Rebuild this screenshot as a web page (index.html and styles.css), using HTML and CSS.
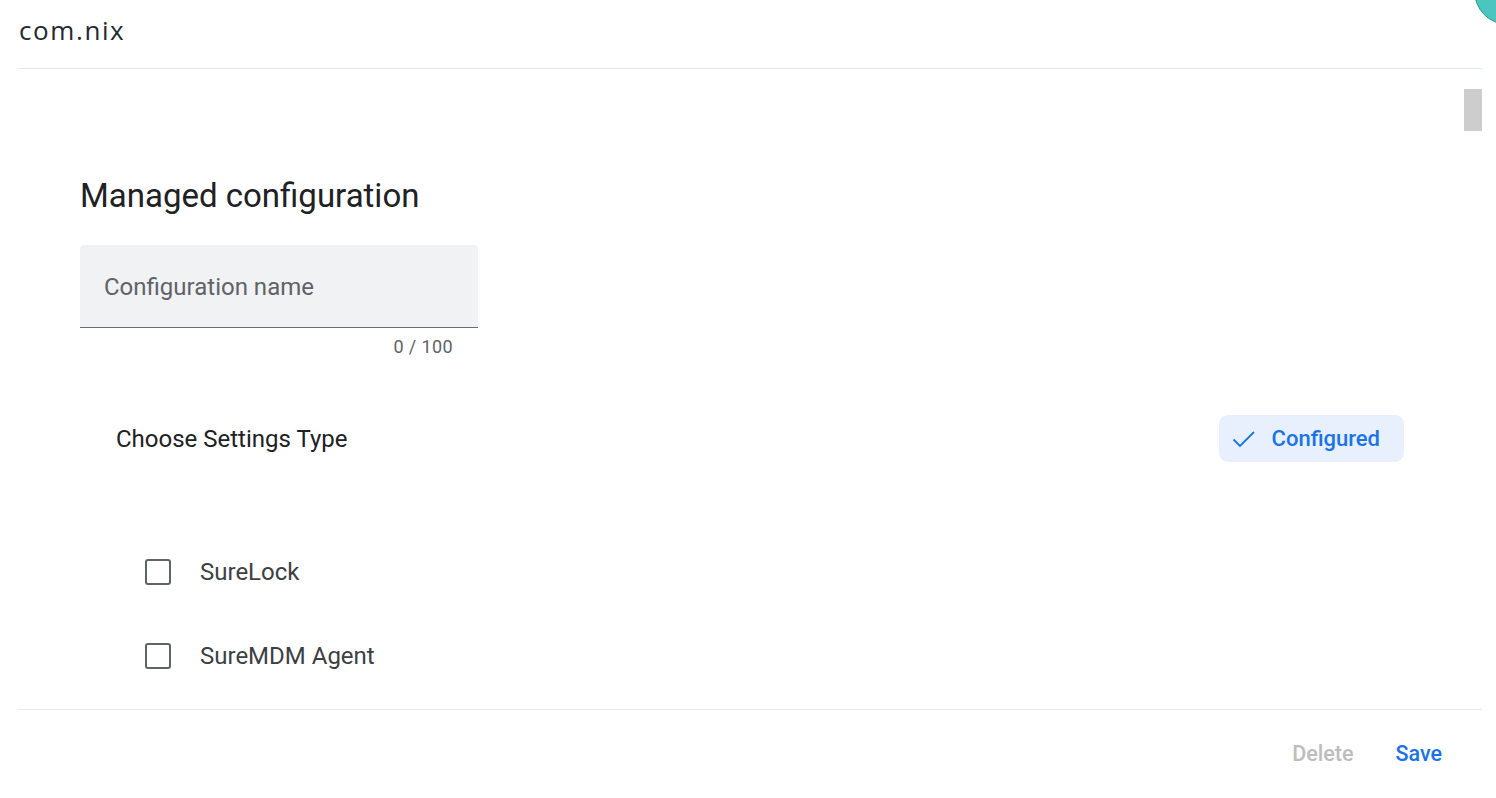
FILE: index.html
```html
<!DOCTYPE html>
<html lang="en">
<head>
  <meta charset="UTF-8">
  <title>com.nix - Managed configuration</title>
  <link rel="stylesheet" href="styles.css">
</head>
<body>

  <div class="avatar"></div>

  <div class="dialog">
    <div class="dialog-header">
      <span class="app-name">com.nix</span>
    </div>

    <div class="dialog-body">
      <div class="content">
        <h2 class="title">Managed configuration</h2>

        <div class="field">
          <input type="text" class="field-input" placeholder="Configuration name" maxlength="100">
        </div>
        <div class="counter">0 / 100</div>

        <div class="settings-row">
          <span class="settings-label">Choose Settings Type</span>
          <button class="chip">
            <svg width="24" height="24" viewBox="0 0 24 24">
              <polyline points="1.5,12.5 8,19 22,5" fill="none" stroke="#1a73e8" stroke-width="1.8"/>
            </svg>
            <span>Configured</span>
          </button>
        </div>

        <div class="options">
          <label class="option">
            <span class="box"></span>
            <span>SureLock</span>
          </label>
          <label class="option">
            <span class="box"></span>
            <span>SureMDM Agent</span>
          </label>
        </div>
      </div>

      <div class="scrollbar">
        <div class="thumb"></div>
      </div>
    </div>

    <div class="dialog-footer">
      <button class="btn btn-disabled">Delete</button>
      <button class="btn btn-primary">Save</button>
    </div>
  </div>

</body>
</html>
```

FILE: styles.css
```css
body {
  margin: 0;
  background: white;
  font-family: Roboto, "Liberation Sans", sans-serif;
  color: #202124;
  overflow: hidden;
}

.avatar {
  position: absolute;
  top: -43px;
  right: -46px;
  width: 66px;
  height: 66px;
  border-radius: 50%;
  background: #4cc4bf;
  border: 1px solid #2f9d98;
}

.dialog {
  margin: 0 14px 0 18px;
}

.dialog-header {
  height: 68px;
  display: flex;
  align-items: center;
  padding-left: 1px;
  border-bottom: 1px solid #e3e9f0;
}

.app-name {
  font-family: "Open Sans", sans-serif;
  font-size: 26px;
  letter-spacing: 1.6px;
  color: #1f2933;
  margin-top: -8px;
}

.dialog-body {
  display: flex;
  height: 640px;
  overflow: hidden;
}

.content {
  flex: 1;
  padding: 107px 0 0 62px;
}

.title {
  margin: 0;
  font-size: 33px;
  font-weight: 400;
  line-height: 40px;
  color: #202124;
}

.field {
  margin-top: 29px;
  width: 398px;
  height: 82px;
  background: #f1f2f4;
  border-radius: 4px 4px 0 0;
  border-bottom: 1px solid #6b6e72;
}

.field-input {
  width: 100%;
  height: 100%;
  box-sizing: border-box;
  padding: 2px 24px 0;
  border: none;
  background: transparent;
  font-family: Roboto, sans-serif;
  font-size: 24px;
  color: #202124;
  outline: none;
}

.field-input::placeholder {
  color: #5f6368;
}

.counter {
  width: 373px;
  margin-top: 9px;
  text-align: right;
  font-size: 18px;
  line-height: 20px;
  color: #5f6368;
  letter-spacing: 0.4px;
}

.settings-row {
  margin-top: 58px;
  display: flex;
  justify-content: space-between;
  align-items: center;
  padding: 0 60px 0 36px;
}

.settings-label {
  font-size: 24px;
  color: #202124;
}

.chip {
  display: flex;
  align-items: center;
  gap: 16px;
  height: 47px;
  padding: 0 24px 0 13px;
  border: none;
  border-radius: 9px;
  background: #e8f0fe;
  color: #1a73e8;
  font-family: Roboto, sans-serif;
  font-size: 22px;
  font-weight: 500;
  cursor: pointer;
}

.options {
  margin-top: 68px;
  padding-left: 65px;
}

.option {
  display: flex;
  align-items: center;
  gap: 29px;
  height: 84px;
  font-size: 24px;
  color: #3c4043;
  cursor: pointer;
}

.box {
  width: 22px;
  height: 22px;
  border: 2px solid #5f6368;
  border-radius: 3px;
}

.scrollbar {
  width: 18px;
  padding-top: 20px;
}

.thumb {
  height: 42px;
  background: #cdcdcd;
}

.dialog-footer {
  border-top: 1px solid #e8e8e8;
  height: 88px;
  display: flex;
  justify-content: flex-end;
  align-items: center;
  gap: 42px;
  padding-right: 40px;
}

.btn {
  border: none;
  background: none;
  padding: 0;
  margin-top: -2px;
  font-family: Roboto, sans-serif;
  font-size: 21.5px;
  font-weight: 500;
  cursor: pointer;
}

.btn-disabled {
  color: #bdbdbd;
}

.btn-primary {
  color: #1a73e8;
}
```
